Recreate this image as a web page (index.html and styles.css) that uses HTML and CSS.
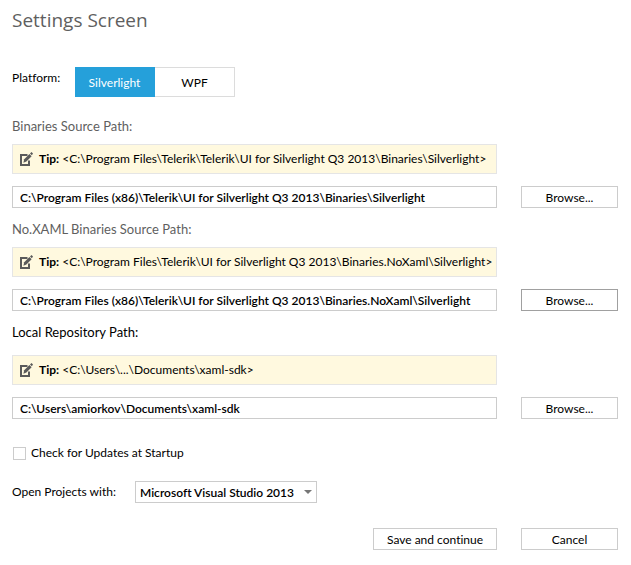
FILE: index.html
```html
<!DOCTYPE html>
<html lang="en">
<head>
<meta charset="utf-8">
<meta name="viewport" content="width=device-width, initial-scale=1">
<title>Settings Screen</title>
<link rel="stylesheet" href="styles.css">
</head>
<body>
<svg class="sprite" aria-hidden="true">
  <symbol id="note" viewBox="0 0 13 14">
    <path d="M7.5 3H1v10h8V8.5" fill="none" stroke="#5a5a5a" stroke-width="2"/>
    <path d="M3.4 10.8l.8-3.6L9.4 2l2.2 2.2-5.2 5.4z" fill="#5a5a5a"/>
    <path d="M10 1.5L11.5 0 13 1.6l-1.2 1.6z" fill="#5a5a5a"/>
  </symbol>
</svg>
<form class="settings">
  <h1 class="title">Settings Screen</h1>

  <div class="platform" role="group" aria-labelledby="platform-label">
    <span class="platform-label" id="platform-label">Platform:</span>
    <div class="segments">
      <button class="segment segment-active" type="button" aria-pressed="true">Silverlight</button>
      <button class="segment" type="button" aria-pressed="false">WPF</button>
    </div>
  </div>

  <section class="path">
    <label class="path-label" for="binaries">Binaries Source Path:</label>
    <p class="tip"><svg class="icon" aria-hidden="true"><use href="#note"/></svg><span><b>Tip:</b> &lt;C:\Program Files\Telerik\Telerik\UI for Silverlight Q3 2013\Binaries\Silverlight&gt;</span></p>
    <input class="field" id="binaries" type="text" value="C:\Program Files (x86)\Telerik\UI for Silverlight Q3 2013\Binaries\Silverlight">
    <button class="button" type="button">Browse...</button>
  </section>

  <section class="path">
    <label class="path-label" for="noxaml">No.XAML Binaries Source Path:</label>
    <p class="tip"><svg class="icon" aria-hidden="true"><use href="#note"/></svg><span><b>Tip:</b> &lt;C:\Program Files\Telerik\UI for Silverlight Q3 2013\Binaries.NoXaml\Silverlight&gt;</span></p>
    <input class="field" id="noxaml" type="text" value="C:\Program Files (x86)\Telerik\UI for Silverlight Q3 2013\Binaries.NoXaml\Silverlight">
    <button class="button button-current" type="button">Browse...</button>
  </section>

  <section class="path path-local">
    <label class="path-label" for="local">Local Repository Path:</label>
    <p class="tip"><svg class="icon" aria-hidden="true"><use href="#note"/></svg><span><b>Tip:</b> &lt;C:\Users\...\Documents\xaml-sdk&gt;</span></p>
    <input class="field" id="local" type="text" value="C:\Users\amiorkov\Documents\xaml-sdk">
    <button class="button" type="button">Browse...</button>
  </section>

  <label class="updates"><input class="check" type="checkbox">Check for Updates at Startup</label>

  <div class="open-with">
    <label class="open-label" for="studio">Open Projects with:</label>
    <div class="select-box">
      <select class="select" id="studio"><option>Microsoft Visual Studio 2013</option></select>
      <svg class="arrow" viewBox="0 0 8 4" aria-hidden="true"><path d="M0 0h8L4 4z" fill="#767676"/></svg>
    </div>
  </div>

  <div class="actions">
    <button class="button" type="submit">Save and continue</button>
    <button class="button" type="button">Cancel</button>
  </div>
</form>
</body>
</html>
```
FILE: styles.css
```css
* { box-sizing: border-box; }

body {
  margin: 0;
  background: #fff;
  color: #000;
  font: 12px/18px "Segoe UI", Lato, "Open Sans", sans-serif;
  font-variant-ligatures: none;
}

button, input, select { font: inherit; color: inherit; }

.sprite { position: absolute; width: 0; height: 0; }

.settings { padding: 6px 13px 15px 12px; }

.title {
  margin: 0 0 33px;
  color: #5f5f5f;
  font-family: "Segoe UI", "Open Sans", sans-serif;
  font-size: 19px;
  font-weight: 400;
  line-height: 28px;
}

.platform { display: flex; margin-bottom: 20px; }
.platform-label { width: 63px; padding-top: 2px; }
.segments { display: flex; }
.segment {
  width: 80px;
  height: 30px;
  padding: 2px 0 0;
  border: 1px solid #dcdcdc;
  border-left: 0;
  background: #fff;
}
.segment-active { border-color: #25a0da; background: #25a0da; color: #fff; }

.path {
  display: grid;
  grid-template-columns: minmax(0, 1fr) 97px;
  column-gap: 24px;
  margin-bottom: 12px;
}
.path-label { grid-column: 1 / -1; margin-bottom: 9px; color: #5f5f5f; font-size: 13px; }
.path-local .path-label { margin-bottom: 14px; color: #000; }

.tip {
  display: flex;
  grid-column: 1;
  align-items: center;
  gap: 6px;
  height: 30px;
  margin: 0 0 12px;
  padding: 0 0 0 7px;
  border: 1px solid #e5e5e5;
  background: #fff9df;
  white-space: nowrap;
}
.tip b { font-weight: 700; }
.icon { flex: none; width: 13px; height: 14px; }

.field {
  grid-column: 1;
  min-width: 0;
  height: 22px;
  padding: 0 7px;
  border: 1px solid #ccc;
  border-radius: 0;
  background: #fff;
  font-weight: 600;
}

.button {
  height: 22px;
  padding: 2px 0 0;
  border: 1px solid #ccc;
  border-radius: 0;
  background: #fff;
}
.button-current { border-color: #a0a0a0; }

.updates {
  display: flex;
  align-items: center;
  gap: 5px;
  margin: 25px 0 19px;
  padding-left: 1px;
}
.check {
  appearance: none;
  width: 13px;
  height: 13px;
  margin: 0;
  border: 1px solid #ccc;
  background: #fff;
}
.check:checked { background: #25a0da; }

.open-with { display: flex; align-items: center; }
.open-label { width: 123px; }
.select-box { position: relative; }
.select {
  display: block;
  appearance: none;
  width: 182px;
  height: 22px;
  padding: 1px 0 0 4px;
  border: 1px solid #ccc;
  border-radius: 0;
  background: #fff;
  font-weight: 600;
}
.arrow { position: absolute; top: 9px; right: 5px; width: 8px; height: 4px; pointer-events: none; }

.actions {
  display: grid;
  grid-template-columns: 124px 97px;
  justify-content: end;
  gap: 24px;
  margin-top: 25px;
}
```
